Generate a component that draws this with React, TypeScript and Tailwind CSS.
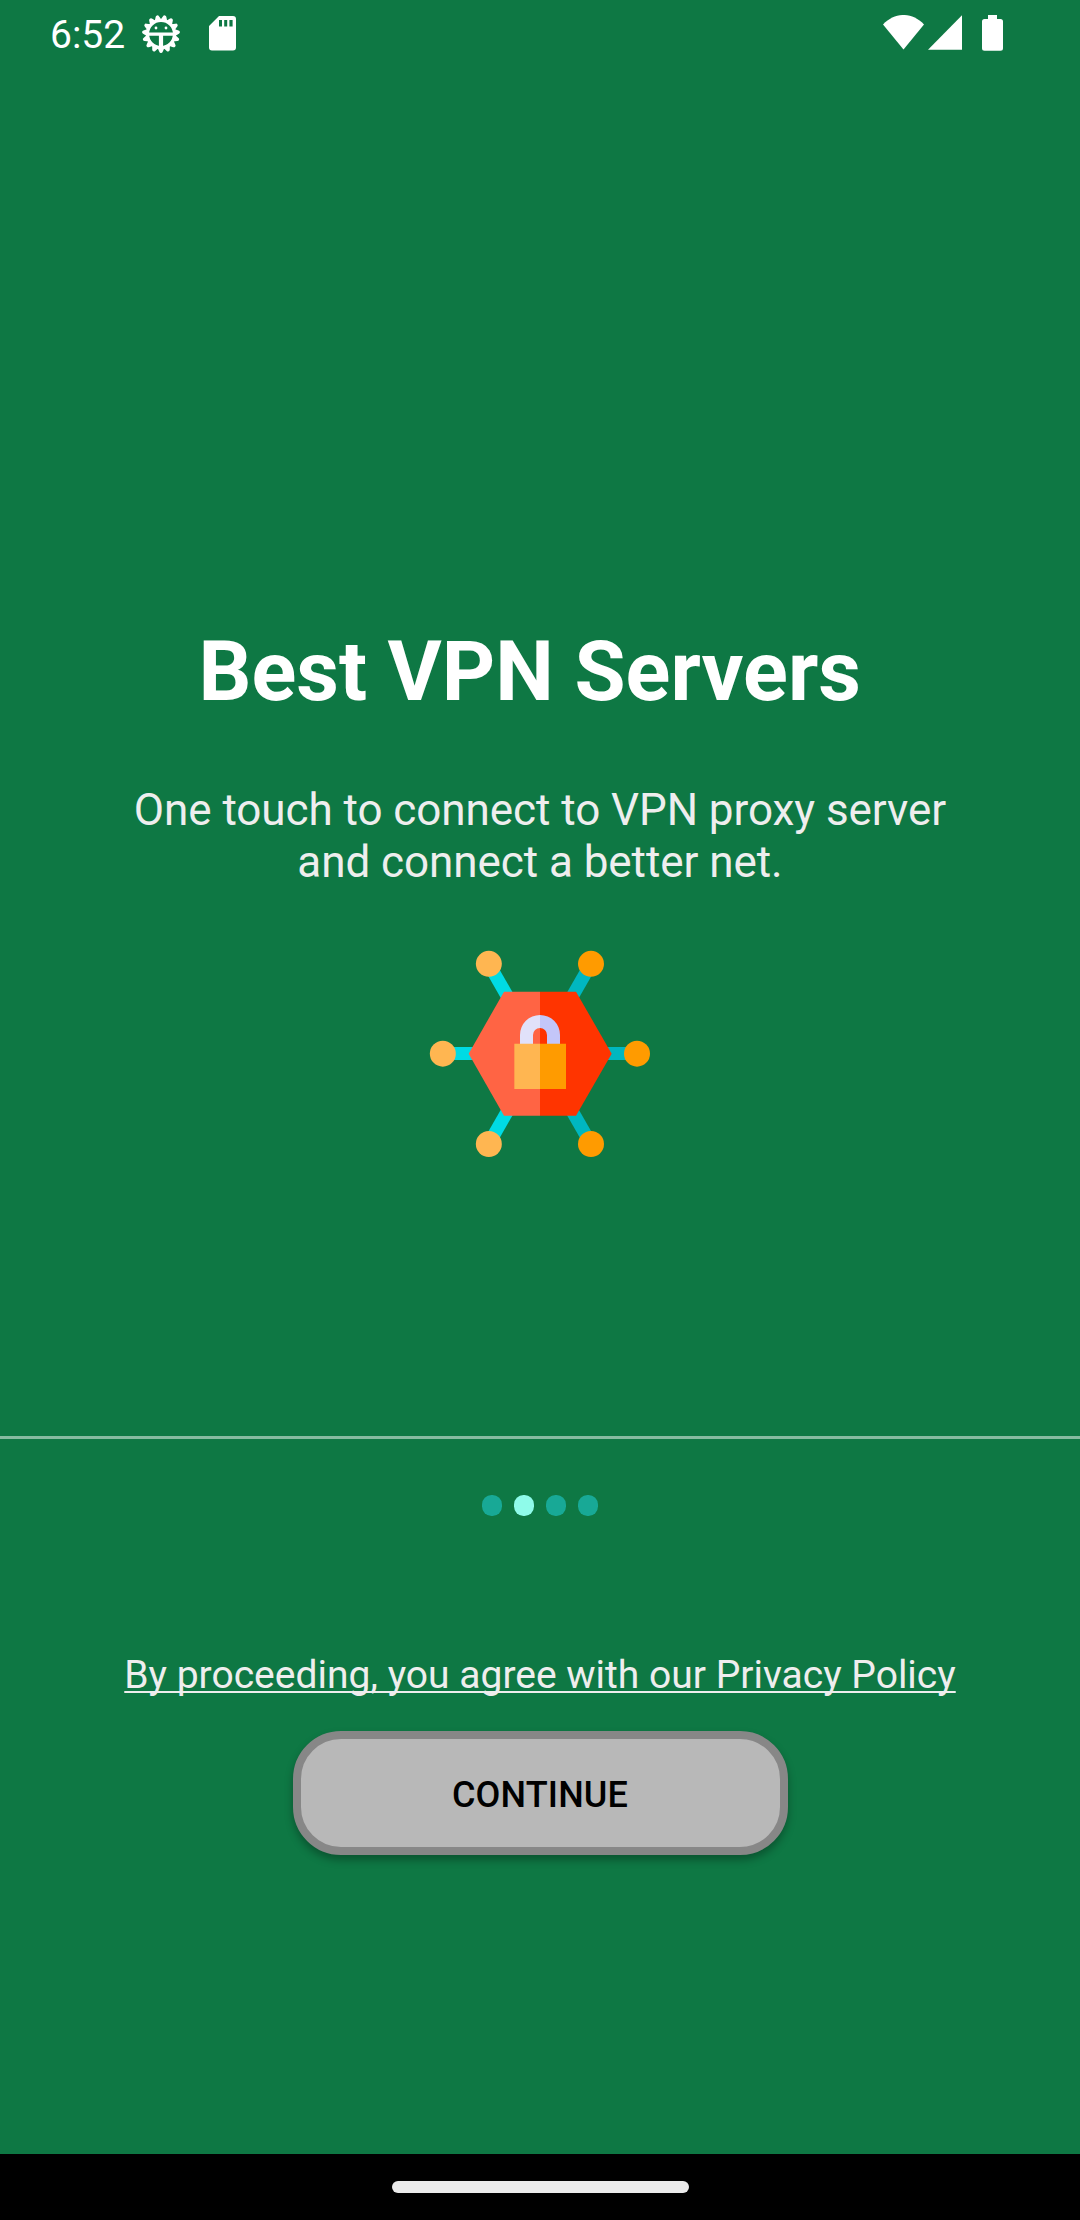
const gearTeeth = Array.from({ length: 15 }, (_, i) => i * 24 + 12);

function GearIcon() {
  return (
    <svg className="ml-4 mt-[13.5px] h-10 w-10" viewBox="0 0 40 40" fill="#fff">
      {gearTeeth.map((a) => (
        <path key={a} d="M16.400 6.500L18.300 2.200Q18.700 1 20 1T21.700 2.200L23.600 6.500z" transform={`rotate(${a} 20 20)`} />
      ))}
      <circle cx="20" cy="20" r="13.500" fill="none" stroke="#fff" strokeWidth="3.200" />
      <path d="M7 18.400h26v3.400H22.100V34h-4.200V21.800H7z" />
      <circle cx="15" cy="14" r="1.400" />
      <circle cx="25" cy="14" r="1.400" />
    </svg>
  );
}

function SdCardIcon() {
  return (
    <svg className="ml-7 mt-4 h-[35px] w-[27px]" viewBox="0 0 27 35">
      <path
        fill="#fff"
        fillRule="evenodd"
        d="M10 0H24a3 3 0 0 1 3 3V31.500a3 3 0 0 1-3 3H3a3 3 0 0 1-3-3V10zM10 4V10.500H13V4zM15.200 4V10.500H18.200V4zM20.400 4V10.500H23.600V4z"
      />
    </svg>
  );
}

function StatusBar() {
  return (
    <header className="flex h-[66px] items-start pl-[50px] pr-[77px] text-white">
      <span className="mt-3 text-[39px] leading-[46px]">6:52</span>
      <GearIcon />
      <SdCardIcon />
      <svg className="ml-auto mt-[15px] h-[35px] w-[41px]" viewBox="0 0 41 35" fill="#fff">
        <path d="M0 9.500C12-3.200 29-3.200 41 9.500L20.500 34.500z" />
      </svg>
      <svg className="ml-[3.5px] mt-[15px] h-[35px] w-[34.500px]" viewBox="0 0 34.5 35" fill="#fff">
        <path d="M0 34.700L34.200 0V34.700z" />
      </svg>
      <svg className="ml-5 mt-[15px] h-9 w-[21px]" viewBox="0 0 21 36" fill="#fff">
        <path d="M6 0H15V4H18.500A2.500 2.500 0 0 1 21 6.500V33.300A2.500 2.500 0 0 1 18.500 35.800H2.500A2.500 2.500 0 0 1 0 33.300V6.500A2.500 2.500 0 0 1 2.500 4H6z" />
      </svg>
    </header>
  );
}

function NetworkLockIcon() {
  return (
    <svg className="mt-[52px] h-[230px] w-60" viewBox="0 0 720 690">
      <g stroke="#00dbe4" strokeWidth="39">
        <path d="M206 71L280 200" />
        <path d="M68 340.500H200" />
        <path d="M206 612L280 483" />
      </g>
      <g stroke="#00b7c0" strokeWidth="39">
        <path d="M513 71L439 200" />
        <path d="M651 340.500H520" />
        <path d="M513 612L439 483" />
      </g>
      <path fill="#ff6444" d="M360 155H252L146 341L252 527H360z" />
      <path fill="#ff3400" d="M360 155H468L575 341L468 527H360z" />
      <g fill="#ffb651">
        <circle cx="206.500" cy="71.500" r="39" />
        <circle cx="68.500" cy="341" r="39" />
        <circle cx="206.500" cy="612" r="39" />
      </g>
      <g fill="#ff9b00">
        <circle cx="513" cy="71.500" r="39" />
        <circle cx="651" cy="341" r="39" />
        <circle cx="513" cy="612" r="39" />
      </g>
      <path fill="#e1e1fa" d="M300 315V285A60 60 0 0 1 360 225V264A21 21 0 0 0 339 285V315z" />
      <path fill="#c3c6f9" d="M420 315V285A60 60 0 0 0 360 225V264A21 21 0 0 1 381 285V315z" />
      <path fill="#ffb651" d="M283 311H360V447H283z" />
      <path fill="#ff9b00" d="M360 311H438V447H360z" />
    </svg>
  );
}

function PageDots({ active }: { active: number }) {
  return (
    <div className="mt-14 flex justify-center gap-3">
      {[0, 1, 2, 3].map((i) => (
        <span
          key={i}
          className={`h-[21px] w-5 rounded-[9.5px] ${i === active ? "bg-[#8ffbea]" : "bg-[#18a996]"}`}
        />
      ))}
    </div>
  );
}

export default function App() {
  return (
    <div className="flex h-[2220px] w-[1080px] flex-col overflow-hidden bg-[#0e7844] font-['Roboto',sans-serif]">
      <StatusBar />
      <main className="flex h-[1370px] flex-col items-center pt-[558px] text-center">
        <h1 className="whitespace-pre text-[83px] font-bold leading-[96px] text-white">{"Best VPN Servers "}</h1>
        <p className="mt-16 text-[44px] leading-[52px] tracking-[-0.06px] text-[#eeeeee]">
          One touch to connect to VPN proxy server
          <br />
          and connect a better net.
        </p>
        <NetworkLockIcon />
      </main>
      <footer className="flex h-[718px] flex-col items-center">
        <div className="h-[3px] w-full shrink-0 bg-[#86bba1]" />
        <PageDots active={1} />
        <a className="mt-[136px] text-[39px] leading-[46px] text-[#eeeeee] underline decoration-2 underline-offset-[3px] [text-decoration-skip-ink:none]">
          By proceeding, you agree with our Privacy Policy
        </a>
        <button className="mt-[33px] h-[124px] w-[495px] rounded-[48px] border-8 border-[#878787] bg-[#b8b8b8] pt-1 text-[36px] font-medium tracking-[0.15px] text-black shadow-[0_5px_8px_rgba(0,0,0,0.3)]">
          CONTINUE
        </button>
      </footer>
      <nav className="flex h-[66px] justify-center bg-black pt-[27px]">
        <span className="h-[11.5px] w-[297px] rounded-full bg-[#ebebeb]" />
      </nav>
    </div>
  );
}
